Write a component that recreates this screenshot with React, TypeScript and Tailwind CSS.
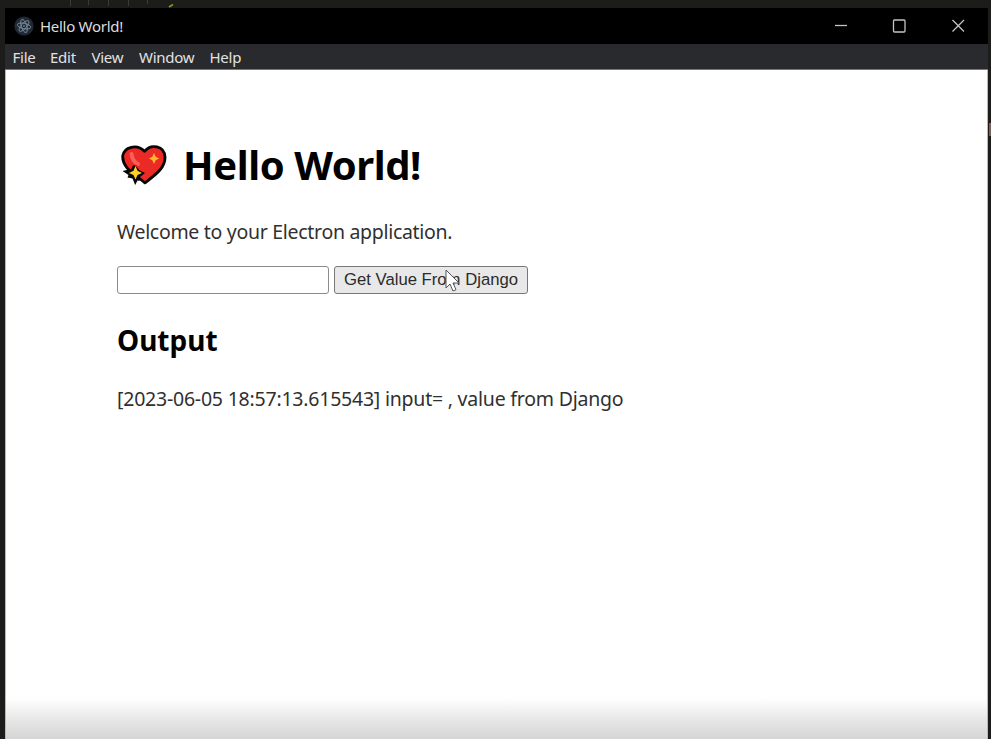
import React from "react";

const menus = [
  { label: "File", style: "w-[37.5px]" },
  { label: "Edit", style: "w-[41.5px]" },
  { label: "View", style: "w-[47.5px]" },
  { label: "Window", style: "w-[70.5px]" },
  { label: "Help", style: "w-[40px]" },
];

function ElectronIcon() {
  return (
    <svg className="h-5 w-5 shrink-0" viewBox="0 0 20 20" fill="none">
      <circle cx="10" cy="10" r="9.6" fill="#202a36" />
      <g stroke="#7d8d9d" strokeWidth="0.9" transform="rotate(12 10 10)">
        <ellipse cx="10" cy="10" rx="6.8" ry="2.7" />
        <ellipse cx="10" cy="10" rx="6.8" ry="2.7" transform="rotate(60 10 10)" />
        <ellipse cx="10" cy="10" rx="6.8" ry="2.7" transform="rotate(120 10 10)" />
      </g>
      <circle cx="10" cy="10" r="0.8" fill="#9fb0bf" />
    </svg>
  );
}

function SparklingHeart() {
  return (
    <svg className="h-[42px] w-12 shrink-0" viewBox="0 0 48 42">
      <path
        d="M25 38.8 L19 34 C8 27 2.3 20 2.7 12 C4 2.8 17 -0.5 24.5 7.3 C31 -0.5 44.3 1.5 45 13 C45.5 24 35 31 25 38.8Z"
        fill="#ec2a25"
        stroke="#080505"
        strokeWidth="2.8"
        strokeLinejoin="round"
      />
      <path d="M2.5 27 L11 25 L13 21.5 L17 21 L19 26 L25 29 L20 33 L19.5 37 L17.5 36.5 L15.2 41 L12.5 34.5 L7.5 33.5 L8.5 31Z" fill="#080505" />
      <path d="M11.5 10 Q12.5 17.5 18 20" fill="none" stroke="#fa6058" strokeWidth="4" strokeLinecap="round" />
      <path d="M14 21 L18 22 L22.5 27 L19 25Z" fill="#ec2a25" />
      <path d="M34 9 L35.7 12.8 L39 14.5 L35.7 16.2 L34 20 L32.3 16.2 L29 14.5 L32.3 12.8Z" fill="#ffb52d" />
      <path d="M15.5 22 L17.5 26.7 L22 29 L17.5 31 L15.5 35.5 L13.5 31 L9 29 L13.5 26.7Z" fill="#ffcf22" />
    </svg>
  );
}

export default function App() {
  return (
    <div className="relative h-[739px] w-[991px] overflow-hidden bg-[#1c1c1b] pl-[5px] pr-[3px] pt-2 font-['Noto_Sans',sans-serif]">
      <svg className="absolute left-0 top-0 h-2 w-[200px]" viewBox="0 0 200 8">
        <path d="M70.5 0v6M88.5 0v5M108.5 0v6M128.5 0v6M147.5 0v4" stroke="#3a3a39" />
        <path d="M169 7l4-2.5" stroke="#929226" strokeWidth="1.5" />
      </svg>
      <div className="absolute left-[989px] top-[123px] h-[13px] w-0.5 bg-[#795f58]" />

      <div className="flex h-[731px] flex-col">
        <header className="flex h-9 shrink-0 items-center justify-between bg-black pl-[9px] pr-[23px] text-[#dedede]">
          <div className="flex items-center gap-1.5">
            <ElectronIcon />
            <span className="whitespace-nowrap text-[15px] leading-5 tracking-[-0.28px]">Hello World!</span>
          </div>
          <svg className="h-4 w-[130px]" viewBox="0 0 130 16" fill="none" stroke="#c4c4c4" strokeWidth="1.3">
            <path d="M0 7.5h12" />
            <rect x="58.5" y="2" width="11.5" height="12" rx="1" />
            <path d="M117.5 2l11.5 11.5M129 2l-11.5 11.5" />
          </svg>
        </header>

        <nav className="flex h-[26px] shrink-0 items-center border-b border-[#77787a] bg-[#292a2d] pl-[7.5px] text-[15px] leading-5 tracking-[-0.25px] text-[#e2e2e2]">
          {menus.map((m) => (
            <span key={m.label} className={m.style}>{m.label}</span>
          ))}
        </nav>

        <main className="flex grow flex-col border-x border-[#b9b9b9] bg-[linear-gradient(to_bottom,#fff_0,#fff_628px,#e7e7e7_650px,#d5d5d5_669px)] pl-[111px] pt-[67px]">
          <h1 className="flex h-14 items-center gap-[15px] text-[40px] font-bold leading-[56px] text-black">
            <span className="flex pl-[3px]"><SparklingHeart /></span>
            <span className="whitespace-nowrap tracking-[-0.42px]">Hello World!</span>
          </h1>
          <p className="mt-[25px] h-7 whitespace-nowrap text-[19.5px] leading-7 tracking-[-0.3px] text-[#303030]">
            Welcome to your Electron application.
          </p>
          <div className="mt-5 flex h-7 gap-[5px]">
            <input className="h-7 w-[212px] rounded-[3px] border border-[#8b8b8b] bg-white px-1 outline-none" />
            <div className="relative flex">
              <button className="h-7 w-[194px] whitespace-nowrap rounded-[3px] border border-[#777] bg-[#e8e8e8] font-['Liberation_Sans',sans-serif] text-[16.7px] leading-6 text-[#2b2b2b]">
                Get Value From Django
              </button>
              <svg className="absolute left-[111px] top-[3px] h-6 w-[15px]" viewBox="0 0 15 24">
                <path d="M1 1v18l4-4 3 7 3-1.3-3-6.7h6z" fill="#fff" stroke="#555" strokeWidth="1" />
              </svg>
            </div>
          </div>
          <h2 className="mt-[26px] h-10 whitespace-nowrap text-[28px] font-bold leading-10 text-black">Output</h2>
          <p className="mt-[25px] h-7 whitespace-nowrap text-[19.5px] leading-7 tracking-[-0.22px] text-[#303030]">
            [2023-06-05 18:57:13.615543] input= , value from Django
          </p>
        </main>
      </div>
    </div>
  );
}
